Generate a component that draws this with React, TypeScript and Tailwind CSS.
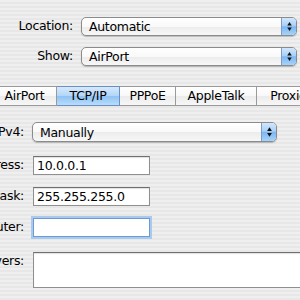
import React from "react";

function Arrows() {
  return (
    <svg width="15" height="100%" viewBox="0 0 15 19" preserveAspectRatio="xMidYMid meet" className="block h-full">
      <path d="M5 8.5 L10 8.5 L7.5 4.5 Z" fill="#111" />
      <path d="M5 10.5 L10 10.5 L7.5 14.5 Z" fill="#111" />
    </svg>
  );
}

function Popup({ value, h }: { value: string; h: string }) {
  return (
    <div
      className={`flex ${h} flex-1 overflow-hidden rounded-[5px] border border-[#8b8b8b] bg-[linear-gradient(to_bottom,#ffffff_0%,#f9f9f9_50%,#ececec_51%,#f7f7f7_100%)] shadow-[0_1px_1px_rgba(0,0,0,0.22)]`}
    >
      <span className="flex-1 truncate pl-[7px] leading-[17px] self-center">{value}</span>
      <div className="w-[15px] shrink-0 border-l border-[#7f9bc9] bg-[linear-gradient(to_bottom,#d2e7fc_0%,#a9d0f7_45%,#7db7f1_52%,#a6d3fa_100%)]">
        <Arrows />
      </div>
    </div>
  );
}

function TopRow({ label, value }: { label: string; value: string }) {
  return (
    <div className="flex items-center">
      <div className="flex w-[73px] justify-end whitespace-nowrap">{label}</div>
      <div className="ml-[8px] flex flex-1">
        <Popup value={value} h="h-[19px]" />
      </div>
    </div>
  );
}

const tabs = [
  { name: "AirPort", w: "w-[64px]" },
  { name: "TCP/IP", w: "w-[63px]", on: true },
  { name: "PPPoE", w: "w-[56px]" },
  { name: "AppleTalk", w: "w-[81px]" },
  { name: "Proxies", w: "w-[70px]" },
];

function Field({
  label,
  value,
  focused,
  h = "h-[19px]",
  w = "w-[117px]",
}: {
  label: string;
  value?: string;
  focused?: boolean;
  h?: string;
  w?: string;
}) {
  return (
    <div className="flex items-start">
      <div className="flex h-[19px] w-[24px] items-center justify-end whitespace-nowrap">{label}</div>
      <div
        className={`ml-[9px] ${w} ${h} shrink-0 border bg-white pl-[3px] leading-[17px] ${
          focused
            ? "border-[#6c9ad4] shadow-[0_0_0_2px_#a9caee]"
            : "border-[#8f8f8f] border-t-[#6f6f6f] shadow-[inset_0_1px_1px_rgba(0,0,0,0.12)]"
        }`}
      >
        {value}
      </div>
    </div>
  );
}

export default function App() {
  return (
    <div className="h-[300px] w-[300px] overflow-hidden bg-[repeating-linear-gradient(to_bottom,#efefef_0px,#efefef_2px,#e7e7e7_2px,#e7e7e7_4px)] font-['DejaVu_Sans',sans-serif] text-[12.5px] tracking-[-0.3px] text-black">
      <div className="flex flex-col gap-[11px] pr-[3px] pt-[17px]">
        <TopRow label="Location:" value="Automatic" />
        <TopRow label="Show:" value="AirPort" />
      </div>

      <div className="ml-[-7px] mt-[20px] flex h-[20px]">
        {tabs.map((t) => (
          <div
            key={t.name}
            className={`${t.w} flex shrink-0 items-center justify-center border-y border-r leading-none ${
              t.on
                ? "border-[#6a8fc6] bg-[linear-gradient(to_bottom,#d6e9fc_0%,#b3d6f9_48%,#8ec3f4_52%,#b9dcfb_100%)]"
                : "border-[#9a9a9a] bg-[linear-gradient(to_bottom,#ffffff_0%,#f8f8f8_48%,#ececec_52%,#f7f7f7_100%)]"
            }`}
          >
            {t.name}
          </div>
        ))}
      </div>

      <div className="mt-[16px] flex flex-col">
        <div className="flex items-center">
          <div className="flex w-[24px] justify-end whitespace-nowrap">Configure IPv4:</div>
          <div className="ml-[8px] flex w-[245px]">
            <Popup value="Manually" h="h-[20px]" />
          </div>
        </div>
        <div className="mt-[14px]">
          <Field label="IP Address:" value="10.0.0.1" />
        </div>
        <div className="mt-[12px]">
          <Field label="Subnet Mask:" value="255.255.255.0" />
        </div>
        <div className="mt-[12px]">
          <Field label="Router:" focused />
        </div>
        <div className="mt-[15px]">
          <Field label="DNS Servers:" h="h-[36px]" w="w-[290px]" />
        </div>
      </div>
    </div>
  );
}
